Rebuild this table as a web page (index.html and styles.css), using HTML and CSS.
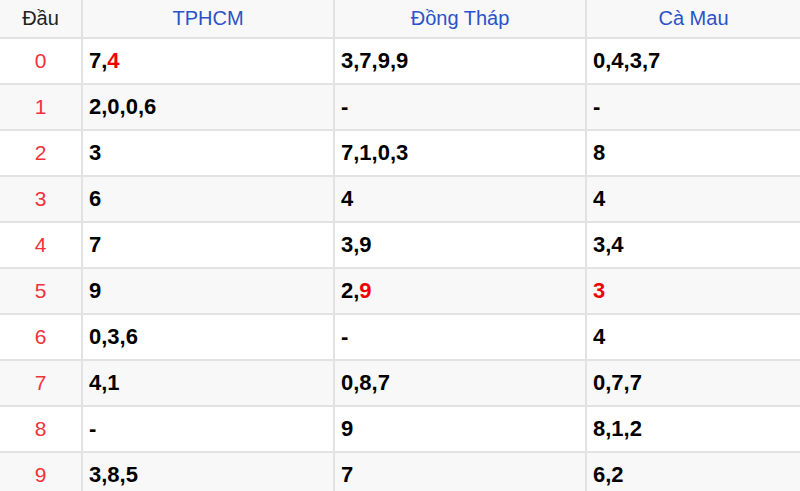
FILE: index.html
```html
<!DOCTYPE html>
<html lang="vi">
<head>
<meta charset="utf-8">
<link rel="stylesheet" href="styles.css">
</head>
<body>
<div class="board">
  <div class="cell head">Đầu</div>
  <div class="cell head prov">TPHCM</div>
  <div class="cell head prov">Đồng Tháp</div>
  <div class="cell head prov">Cà Mau</div>

  <div class="cell key">0</div>
  <div class="cell num">7,<span class="hot">4</span></div>
  <div class="cell num">3,7,9,9</div>
  <div class="cell num">0,4,3,7</div>

  <div class="cell key alt">1</div>
  <div class="cell num alt">2,0,0,6</div>
  <div class="cell num alt">-</div>
  <div class="cell num alt">-</div>

  <div class="cell key">2</div>
  <div class="cell num">3</div>
  <div class="cell num">7,1,0,3</div>
  <div class="cell num">8</div>

  <div class="cell key alt">3</div>
  <div class="cell num alt">6</div>
  <div class="cell num alt">4</div>
  <div class="cell num alt">4</div>

  <div class="cell key">4</div>
  <div class="cell num">7</div>
  <div class="cell num">3,9</div>
  <div class="cell num">3,4</div>

  <div class="cell key alt">5</div>
  <div class="cell num alt">9</div>
  <div class="cell num alt">2,<span class="hot">9</span></div>
  <div class="cell num alt"><span class="hot">3</span></div>

  <div class="cell key">6</div>
  <div class="cell num">0,3,6</div>
  <div class="cell num">-</div>
  <div class="cell num">4</div>

  <div class="cell key alt">7</div>
  <div class="cell num alt">4,1</div>
  <div class="cell num alt">0,8,7</div>
  <div class="cell num alt">0,7,7</div>

  <div class="cell key">8</div>
  <div class="cell num">-</div>
  <div class="cell num">9</div>
  <div class="cell num">8,1,2</div>

  <div class="cell key alt">9</div>
  <div class="cell num alt">3,8,5</div>
  <div class="cell num alt">7</div>
  <div class="cell num alt">6,2</div>
</div>
</body>
</html>
```

FILE: styles.css
```css
html, body {
  margin: 0;
  padding: 0;
  background: #ffffff;
}
body {
  width: 800px;
  height: 491px;
  overflow: hidden;
  font-family: "Liberation Sans", Arial, sans-serif;
}
.board {
  display: grid;
  grid-template-columns: 81px 250px 250px 1fr;
  grid-template-rows: 37px;
  grid-auto-rows: 44px;
  gap: 2px;
  background: #e2e2e2;
}
.cell {
  display: flex;
  align-items: center;
  background: #ffffff;
  color: #000000;
}
.cell.alt, .cell.head {
  background: #f8f8f8;
}
.head {
  justify-content: center;
  font-size: 20px;
  color: #222222;
}
.head.prov {
  color: #2a52c9;
}
.key {
  justify-content: center;
  font-size: 21px;
  color: #f2313a;
}
.num {
  padding-left: 6px;
  font-size: 22px;
  font-weight: bold;
  color: #000000;
}
.hot {
  color: #f00000;
}
```
